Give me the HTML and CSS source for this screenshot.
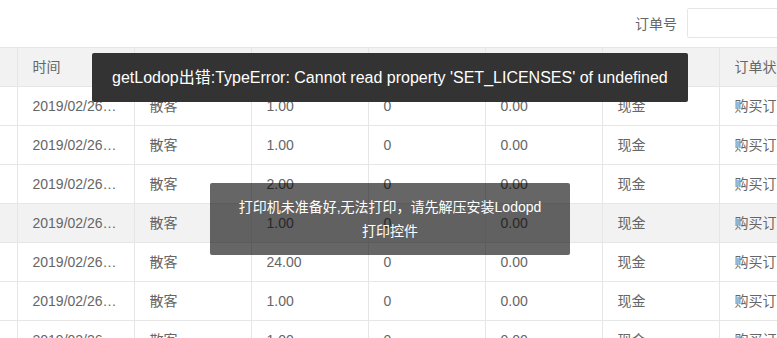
FILE: index.html
```html
<!DOCTYPE html>
<html lang="zh-CN">
<head>
    <meta charset="UTF-8">
    <meta name="viewport" content="width=device-width, initial-scale=1.0">
    <title>订单列表</title>
    <link rel="stylesheet" href="styles.css">
</head>
<body>
    <div class="page">
        <div class="toolbar">
            <label class="label" for="orderNo">订单号</label>
            <input type="text" id="orderNo" class="input">
        </div>

        <table class="grid">
            <colgroup>
                <col class="c0">
                <col class="c"><col class="c"><col class="c"><col class="c">
                <col class="c"><col class="c"><col class="c">
            </colgroup>
            <thead>
                <tr>
                    <th></th>
                    <th>时间</th>
                    <th>客户</th>
                    <th>金额</th>
                    <th>优惠</th>
                    <th>找零</th>
                    <th>支付方式</th>
                    <th>订单状态</th>
                </tr>
            </thead>
            <tbody>
                <tr><td></td><td>2019/02/26 10:21:33</td><td>散客</td><td>1.00</td><td>0</td><td>0.00</td><td>现金</td><td>购买订单</td></tr>
                <tr><td></td><td>2019/02/26 10:18:02</td><td>散客</td><td>1.00</td><td>0</td><td>0.00</td><td>现金</td><td>购买订单</td></tr>
                <tr><td></td><td>2019/02/26 10:15:47</td><td>散客</td><td>2.00</td><td>0</td><td>0.00</td><td>现金</td><td>购买订单</td></tr>
                <tr class="hover"><td></td><td>2019/02/26 10:12:19</td><td>散客</td><td>1.00</td><td>0</td><td>0.00</td><td>现金</td><td>购买订单</td></tr>
                <tr><td></td><td>2019/02/26 10:09:51</td><td>散客</td><td>24.00</td><td>0</td><td>0.00</td><td>现金</td><td>购买订单</td></tr>
                <tr><td></td><td>2019/02/26 10:05:08</td><td>散客</td><td>1.00</td><td>0</td><td>0.00</td><td>现金</td><td>购买订单</td></tr>
                <tr><td></td><td>2019/02/26 10:01:44</td><td>散客</td><td>1.00</td><td>0</td><td>0.00</td><td>现金</td><td>购买订单</td></tr>
            </tbody>
        </table>
    </div>

    <div class="msg msg-error">getLodop出错:TypeError: Cannot read property 'SET_LICENSES' of undefined</div>
    <div class="msg msg-hui">打印机未准备好,无法打印，请先解压安装Lodopd<br>打印控件</div>
</body>
</html>
```

FILE: styles.css
```css
html, body{
    margin: 0;
    padding: 0;
    overflow: hidden;
    background: #fff;
}
body{
    font-family: "Liberation Sans", Arial, "Noto Sans CJK SC", sans-serif;
    font-size: 14px;
    color: #666;
}
.page{
    width: 900px;
}
.toolbar{
    height: 47px;
    display: flex;
    align-items: center;
    justify-content: flex-end;
    padding-right: 23px;
}
.label{
    color: #666;
    margin-right: 10px;
    margin-top: -1px;
}
.input{
    width: 190px;
    height: 30px;
    box-sizing: border-box;
    border: 1px solid #e6e6e6;
    border-radius: 2px;
    margin-top: -1px;
    outline: none;
}

.grid{
    border-collapse: collapse;
    table-layout: fixed;
    width: 836px;
}
.grid .c0{
    width: 17px;
}
.grid .c{
    width: 117px;
}
.grid th,
.grid td{
    height: 38px;
    padding: 0 15px;
    border: 1px solid #e6e6e6;
    text-align: left;
    font-weight: normal;
    white-space: nowrap;
    overflow: hidden;
    text-overflow: ellipsis;
    line-height: 20px;
}
.grid th:first-child,
.grid td:first-child{
    border-left: none;
    padding: 0;
}
.grid thead tr{
    background: #f2f2f2;
}
.grid tr.hover{
    background: #f2f2f2;
}

.msg{
    position: absolute;
    color: #fff;
    border-radius: 2px;
}
.msg-error{
    left: 92px;
    top: 53px;
    width: 596px;
    height: 49px;
    box-sizing: border-box;
    padding: 0 20px;
    line-height: 49px;
    font-size: 16px;
    background: #333;
    white-space: nowrap;
}
.msg-hui{
    left: 210px;
    top: 183px;
    width: 360px;
    box-sizing: border-box;
    padding: 12px 25px;
    line-height: 24px;
    text-align: center;
    background: rgba(0,0,0,.6);
}
```
